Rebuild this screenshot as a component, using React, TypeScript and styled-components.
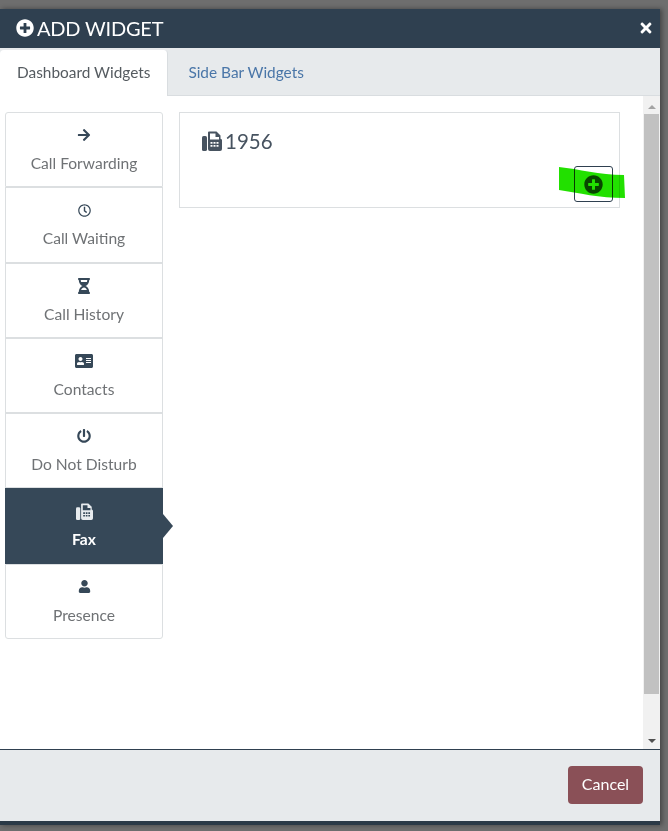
import React from 'react';
import styled, { createGlobalStyle } from 'styled-components';
import {
  FaAddressCard,
  FaArrowRight,
  FaHourglassHalf,
  FaPlusCircle,
  FaPowerOff,
  FaRegClock,
  FaTimes,
  FaUser,
} from 'react-icons/fa';

const GlobalStyle = createGlobalStyle`
  html, body {
    margin: 0;
    padding: 0;
    height: 100%;
    overflow: hidden;
    background: #6e6e6e;
    font-family: Lato, "Open Sans", Arial, sans-serif;
  }
`;

const Modal = styled('div')`
  width: 660px;
  height: 816px;
  margin-top: 9px;
  display: flex;
  flex-direction: column;
  background: #fff;
  border-bottom: 4px solid #2b3a47;
  box-shadow: 2px 0 5px rgba(0, 0, 0, 0.4);
  box-sizing: border-box;
`;

const Header = styled('div')`
  height: 39px;
  flex: none;
  display: flex;
  align-items: center;
  justify-content: space-between;
  padding: 0 6px 2px 16px;
  box-sizing: border-box;
  background: #2f4050;
  color: #fff;
`;

const Title = styled('h4')`
  margin: 0;
  display: flex;
  align-items: center;
  gap: 3px;
  font-size: 20px;
  font-weight: 400;
  letter-spacing: -0.2px;
`;

const CloseButton = styled('button')`
  display: flex;
  padding: 0;
  border: none;
  background: none;
  color: #fff;
  font-size: 16px;
`;

const TabBar = styled('div')`
  height: 48px;
  flex: none;
  display: flex;
  align-items: flex-end;
  box-sizing: border-box;
  background: #e7eaec;
  border-bottom: 1px solid #d9dde0;
`;

const Tab = styled('div')<{ $active?: boolean }>`
  height: ${(p) => (p.$active ? '46px' : '44px')};
  margin-bottom: -1px;
  box-sizing: border-box;
  display: flex;
  align-items: center;
  padding: 0 ${(p) => (p.$active ? '17px' : '20px')} ${(p) => (p.$active ? '2px' : '4px')};
  font-size: 15.4px;
  border-radius: 4px 4px 0 0;
  background: ${(p) => (p.$active ? '#fff' : 'transparent')};
  color: ${(p) => (p.$active ? '#555b60' : '#4a76a8')};
  border-right: ${(p) => (p.$active ? '1px solid #d9dde0' : 'none')};
`;

const Body = styled('div')`
  flex: 1;
  min-height: 0;
  display: flex;
`;

const ScrollArea = styled('div')`
  flex: 1;
  display: flex;
  align-items: flex-start;
  gap: 16px;
  padding: 16px 23px 0 5px;
`;

const SideList = styled('div')`
  width: 158px;
  flex: none;
  display: flex;
  flex-direction: column;
`;

const SideItem = styled('div')<{ $active?: boolean }>`
  position: relative;
  height: 75.3px;
  box-sizing: border-box;
  display: flex;
  flex-direction: column;
  align-items: center;
  padding-top: 14px;
  border: 1px solid ${(p) => (p.$active ? '#364858' : '#dcdfe1')};
  background: ${(p) => (p.$active ? '#364858' : '#fff')};
  color: ${(p) => (p.$active ? '#fff' : '#6f7275')};
  font-size: 15.6px;
  font-weight: ${(p) => (p.$active ? 700 : 400)};

  &:first-child {
    border-radius: 3px 3px 0 0;
  }

  &:last-child {
    border-radius: 0 0 3px 3px;
  }

  ${(p) =>
    p.$active &&
    `
    &::after {
      content: '';
      position: absolute;
      top: 25px;
      right: -11px;
      border-left: 10px solid #364858;
      border-top: 12px solid transparent;
      border-bottom: 12px solid transparent;
    }
  `}
`;

const ItemIcon = styled('div')<{ $active?: boolean }>`
  height: 16px;
  display: flex;
  align-items: center;
  justify-content: center;
  font-size: 14px;
  color: ${(p) => (p.$active ? '#e8ecef' : '#364858')};
`;

const ItemLabel = styled('div')`
  margin-top: 10px;
  line-height: 20px;
`;

const Card = styled('div')`
  position: relative;
  flex: 1;
  height: 96px;
  box-sizing: border-box;
  border: 1px solid #dcdfe1;
  padding: 16px 6px 0 22px;
`;

const CardTitle = styled('div')`
  display: flex;
  align-items: center;
  gap: 3px;
  font-size: 20.5px;
  font-weight: 400;
  line-height: 24px;
  color: #475360;
`;

const AddButton = styled('button')`
  position: absolute;
  right: 6px;
  bottom: 5px;
  width: 39px;
  height: 36px;
  display: flex;
  align-items: center;
  justify-content: center;
  padding: 0;
  background: #fff;
  border: 1px solid #2f4050;
  border-radius: 3px;
  color: #3a5050;
  font-size: 19px;
`;

const Highlight = styled('svg')`
  position: absolute;
  right: -6px;
  bottom: 7px;
  width: 66px;
  height: 33px;
  mix-blend-mode: multiply;
  pointer-events: none;
`;

const Scrollbar = styled('div')`
  width: 17px;
  flex: none;
  display: flex;
  flex-direction: column;
  align-items: center;
  background: #f1f1f1;
`;

const ArrowUp = styled('div')`
  margin-top: 9px;
  border-left: 4px solid transparent;
  border-right: 4px solid transparent;
  border-bottom: 4px solid #a3a3a3;
`;

const ArrowDown = styled('div')`
  margin: auto 0 6px;
  border-left: 4px solid transparent;
  border-right: 4px solid transparent;
  border-top: 4px solid #505050;
`;

const Thumb = styled('div')`
  width: 15px;
  height: 580px;
  margin-top: 5px;
  background: #c1c1c1;
`;

const Footer = styled('div')`
  height: 72px;
  flex: none;
  display: flex;
  align-items: center;
  justify-content: flex-end;
  padding: 0 17px 2px 0;
  box-sizing: border-box;
  background: #e7eaec;
  border-top: 1px solid #2f4050;
`;

const CancelButton = styled('button')`
  width: 75px;
  height: 38px;
  padding: 0 0 2px;
  border: none;
  border-radius: 4px;
  background: #8a5057;
  color: #fff;
  font-family: inherit;
  font-size: 16px;
`;

const FaxIcon: React.FC<{ size: number }> = ({ size }) => (
  <svg width={size} height={size} viewBox="0 0 20 20" fill="currentColor" fillRule="evenodd">
    <rect x="0" y="5" width="5" height="15" rx="1.6" />
    <path d="M6 1.5a1 1 0 0 1 1-1h7.5l4 4v3.2a1.6 1.6 0 0 1 1.5 1.6V18a2 2 0 0 1-2 2H8a2 2 0 0 1-2-2z M8 2.5v6h9V6h-3.5V2.5z M8.5 11v1.8h2V11z M11.5 11v1.8h2V11z M14.5 11v1.8h2V11z M8.5 14v1.8h2V14z M11.5 14v1.8h2V14z M14.5 14v1.8h2V14z" />
  </svg>
);

const widgets = [
  { label: 'Call Forwarding', icon: <FaArrowRight /> },
  { label: 'Call Waiting', icon: <FaRegClock size={13} /> },
  { label: 'Call History', icon: <FaHourglassHalf size={16} /> },
  { label: 'Contacts', icon: <FaAddressCard size={18} /> },
  { label: 'Do Not Disturb', icon: <FaPowerOff /> },
  { label: 'Fax', icon: <FaxIcon size={17} />, active: true },
  { label: 'Presence', icon: <FaUser size={13} /> },
];

const App: React.FC = () => {
  return (
    <>
      <GlobalStyle />
      <Modal>
        <Header>
          <Title>
            <FaPlusCircle size={18} />
            ADD WIDGET
          </Title>
          <CloseButton>
            <FaTimes />
          </CloseButton>
        </Header>
        <TabBar>
          <Tab $active>Dashboard Widgets</Tab>
          <Tab>Side Bar Widgets</Tab>
        </TabBar>
        <Body>
          <ScrollArea>
            <SideList>
              {widgets.map((w) => (
                <SideItem key={w.label} $active={w.active}>
                  <ItemIcon $active={w.active}>{w.icon}</ItemIcon>
                  <ItemLabel>{w.label}</ItemLabel>
                </SideItem>
              ))}
            </SideList>
            <Card>
              <CardTitle>
                <FaxIcon size={20} />
                1956
              </CardTitle>
              <AddButton>
                <FaPlusCircle />
              </AddButton>
              <Highlight viewBox="0 0 66 33">
                <path d="M0 0C20 2 40 8 65 8L66 31C40 31 20 26 0 23Z" fill="#22e000" />
              </Highlight>
            </Card>
          </ScrollArea>
          <Scrollbar>
            <ArrowUp />
            <Thumb />
            <ArrowDown />
          </Scrollbar>
        </Body>
        <Footer>
          <CancelButton>Cancel</CancelButton>
        </Footer>
      </Modal>
    </>
  );
};

export default App;
